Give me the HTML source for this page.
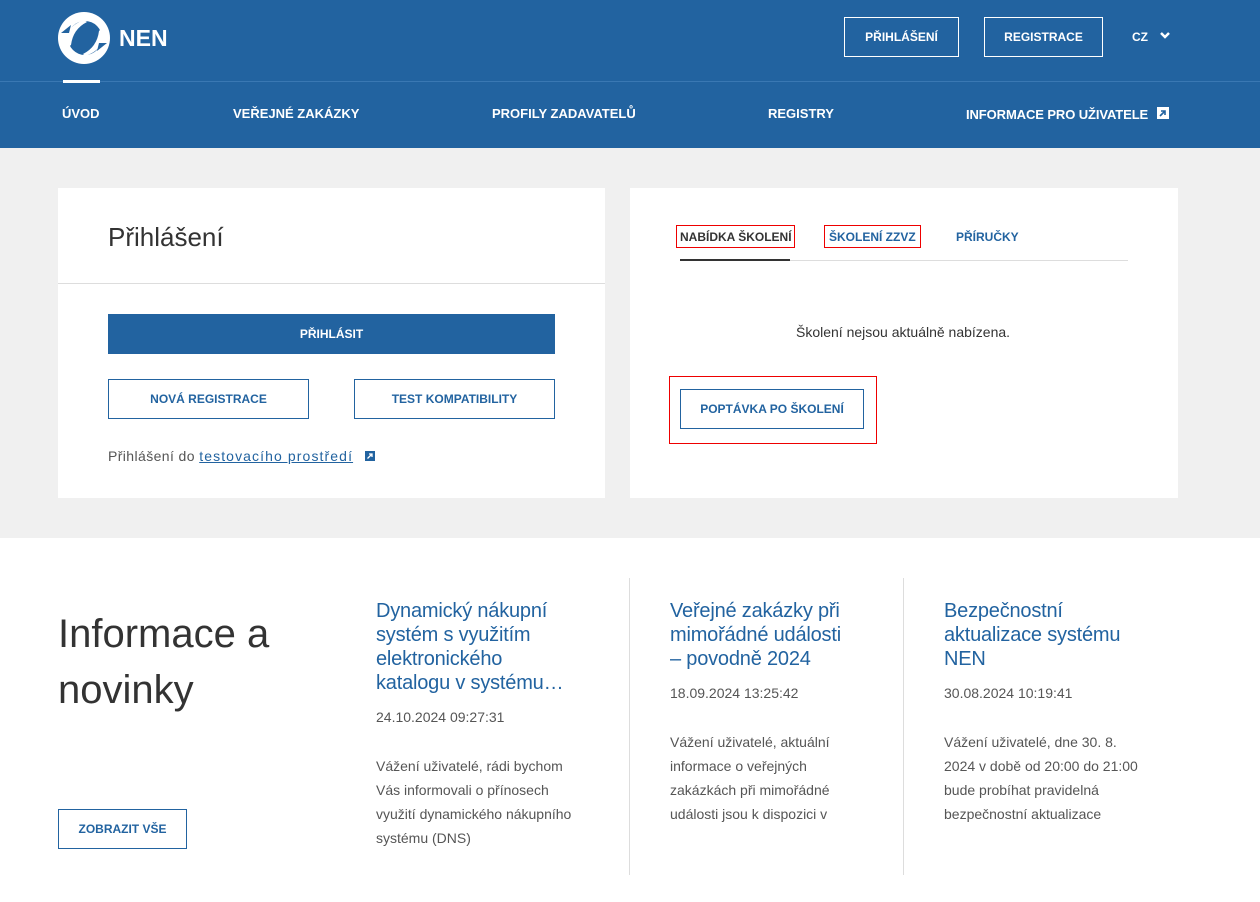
<!DOCTYPE html><html><head><meta charset="utf-8"><style>
*{box-sizing:border-box;margin:0;padding:0}
body{width:1260px;height:902px;font-family:"Liberation Sans",sans-serif;background:#fff;position:relative;overflow:hidden;color:#333}
.a{position:absolute;white-space:nowrap}
.hdr{left:0;top:0;width:1260px;height:148px;background:#2263a0}
.w{color:#fff;font-weight:bold;font-size:13px}
.btnw{border:1px solid #fff;height:40px;color:#fff;font-size:12px;font-weight:bold;display:flex;align-items:center;justify-content:center}
.gray{left:0;top:148px;width:1260px;height:390px;background:#f0f0f0}
.card{background:#fff}
.bb{border:1px solid #2263a0;color:#2263a0;font-size:12px;font-weight:bold;display:flex;align-items:center;justify-content:center;background:#fff}
.t{color:#2263a0;font-size:20px;line-height:24px;letter-spacing:-.2px}
.d{font-size:14px;color:#555}
.p{font-size:14px;line-height:24px;color:#555}
</style></head><body>
<div class="a hdr"></div>
<svg class="a" style="left:57px;top:11px" width="54" height="54" viewBox="0 0 54 54"><circle cx="27" cy="27" r="26" fill="#fff"/><circle cx="28" cy="27" r="17" fill="#2263a0"/><path d="M6 40 Q6 16 27 9 L30 11 Q16 18 14 34 Z" fill="#fff"/><path d="M48 14 Q50 38 28 45 L26 43 Q40 36 42 20 Z" fill="#fff"/><path d="M4 22 L14 14 L12 22Z" fill="#2263a0"/><path d="M50 32 L40 40 L42 32Z" fill="#2263a0"/></svg>
<div class="a" style="left:119px;top:25px;color:#fff;font-weight:bold;font-size:23px">NEN</div>
<div class="a btnw" style="left:844px;top:17px;width:115px">PŘIHLÁŠENÍ</div>
<div class="a btnw" style="left:984px;top:17px;width:119px">REGISTRACE</div>
<div class="a w" style="left:1132px;top:30px;font-size:12px">CZ</div>
<svg class="a" style="left:1159px;top:31px" width="12" height="10"><path d="M2 2l4 4 4-4" stroke="#fff" stroke-width="2.5" fill="none"/></svg>
<div class="a" style="left:0;top:81px;width:1260px;height:1px;background:#3a78b3"></div>
<div class="a" style="left:63px;top:80px;width:37px;height:3px;background:#fff"></div>
<div class="a w" style="left:62px;top:106px">ÚVOD</div>
<div class="a w" style="left:233px;top:106px">VEŘEJNÉ ZAKÁZKY</div>
<div class="a w" style="left:492px;top:106px">PROFILY ZADAVATELŮ</div>
<div class="a w" style="left:768px;top:106px">REGISTRY</div>
<div class="a w" style="left:966px;top:107px;letter-spacing:-.1px">INFORMACE PRO UŽIVATELE</div>
<div class="a" style="left:1157px;top:107px;width:12px;height:12px;background:#fff"></div>
<svg class="a" style="left:1157px;top:107px" width="12" height="12"><path d="M3 9L8 4M4 4h4v4" stroke="#2263a0" stroke-width="1.6" fill="none"/></svg>
<div class="a gray"></div>
<div class="a card" style="left:58px;top:188px;width:547px;height:310px"></div>
<div class="a" style="left:108px;top:222px;font-size:26px;color:#333">Přihlášení</div>
<div class="a" style="left:58px;top:283px;width:547px;height:1px;background:#ddd"></div>
<div class="a" style="left:108px;top:314px;width:447px;height:40px;background:#2263a0;color:#fff;font-size:12px;font-weight:bold;display:flex;align-items:center;justify-content:center">PŘIHLÁSIT</div>
<div class="a bb" style="left:108px;top:379px;width:201px;height:40px">NOVÁ REGISTRACE</div>
<div class="a bb" style="left:354px;top:379px;width:201px;height:40px">TEST KOMPATIBILITY</div>
<div class="a" style="left:108px;top:448px;font-size:14px;color:#555;letter-spacing:.4px">Přihlášení do <span style="color:#2263a0;text-decoration:underline;letter-spacing:1.1px">testovacího prostředí</span></div>
<div class="a" style="left:365px;top:451px;width:10px;height:10px;background:#2263a0"></div>
<svg class="a" style="left:365px;top:451px" width="10" height="10"><path d="M2.5 7.5L7 3M4 3h3v3" stroke="#fff" stroke-width="1.3" fill="none"/></svg>
<div class="a card" style="left:630px;top:188px;width:548px;height:310px"></div>
<div class="a" style="left:676px;top:225px;width:119px;height:23px;border:1px solid #e00"></div>
<div class="a" style="left:680px;top:230px;font-size:12px;font-weight:bold;color:#333">NABÍDKA ŠKOLENÍ</div>
<div class="a" style="left:824px;top:225px;width:97px;height:23px;border:1px solid #e00"></div>
<div class="a" style="left:829px;top:230px;font-size:12px;font-weight:bold;color:#2263a0">ŠKOLENÍ ZZVZ</div>
<div class="a" style="left:956px;top:230px;font-size:12px;font-weight:bold;color:#2263a0">PŘÍRUČKY</div>
<div class="a" style="left:680px;top:260px;width:448px;height:1px;background:#ddd"></div>
<div class="a" style="left:680px;top:259px;width:110px;height:2px;background:#333"></div>
<div class="a" style="left:796px;top:324px;font-size:14px;color:#333">Školení nejsou aktuálně nabízena.</div>
<div class="a" style="left:669px;top:376px;width:208px;height:68px;border:1px solid #e00"></div>
<div class="a bb" style="left:680px;top:389px;width:184px;height:40px">POPTÁVKA PO ŠKOLENÍ</div>
<div class="a" style="left:58px;top:606px;font-size:40px;line-height:56px;color:#333">Informace a<br>novinky</div>
<div class="a bb" style="left:58px;top:809px;width:129px;height:40px">ZOBRAZIT VŠE</div>
<div class="a" style="left:629px;top:578px;width:1px;height:297px;background:#ddd"></div>
<div class="a" style="left:903px;top:578px;width:1px;height:297px;background:#ddd"></div>
<div class="a t" style="left:376px;top:599px">Dynamický nákupní<br>systém s využitím<br>elektronického<br>katalogu v systému…</div>
<div class="a d" style="left:376px;top:709px">24.10.2024 09:27:31</div>
<div class="a p" style="left:376px;top:754px">Vážení uživatelé, rádi bychom<br>Vás informovali o přínosech<br>využití dynamického nákupního<br>systému (DNS)</div>
<div class="a t" style="left:670px;top:599px">Veřejné zakázky při<br>mimořádné události<br>– povodně 2024</div>
<div class="a d" style="left:670px;top:685px">18.09.2024 13:25:42</div>
<div class="a p" style="left:670px;top:730px">Vážení uživatelé, aktuální<br>informace o veřejných<br>zakázkách při mimořádné<br>události jsou k dispozici v</div>
<div class="a t" style="left:944px;top:599px">Bezpečnostní<br>aktualizace systému<br>NEN</div>
<div class="a d" style="left:944px;top:685px">30.08.2024 10:19:41</div>
<div class="a p" style="left:944px;top:730px">Vážení uživatelé, dne 30. 8.<br>2024 v době od 20:00 do 21:00<br>bude probíhat pravidelná<br>bezpečnostní aktualizace</div>
</body></html>
